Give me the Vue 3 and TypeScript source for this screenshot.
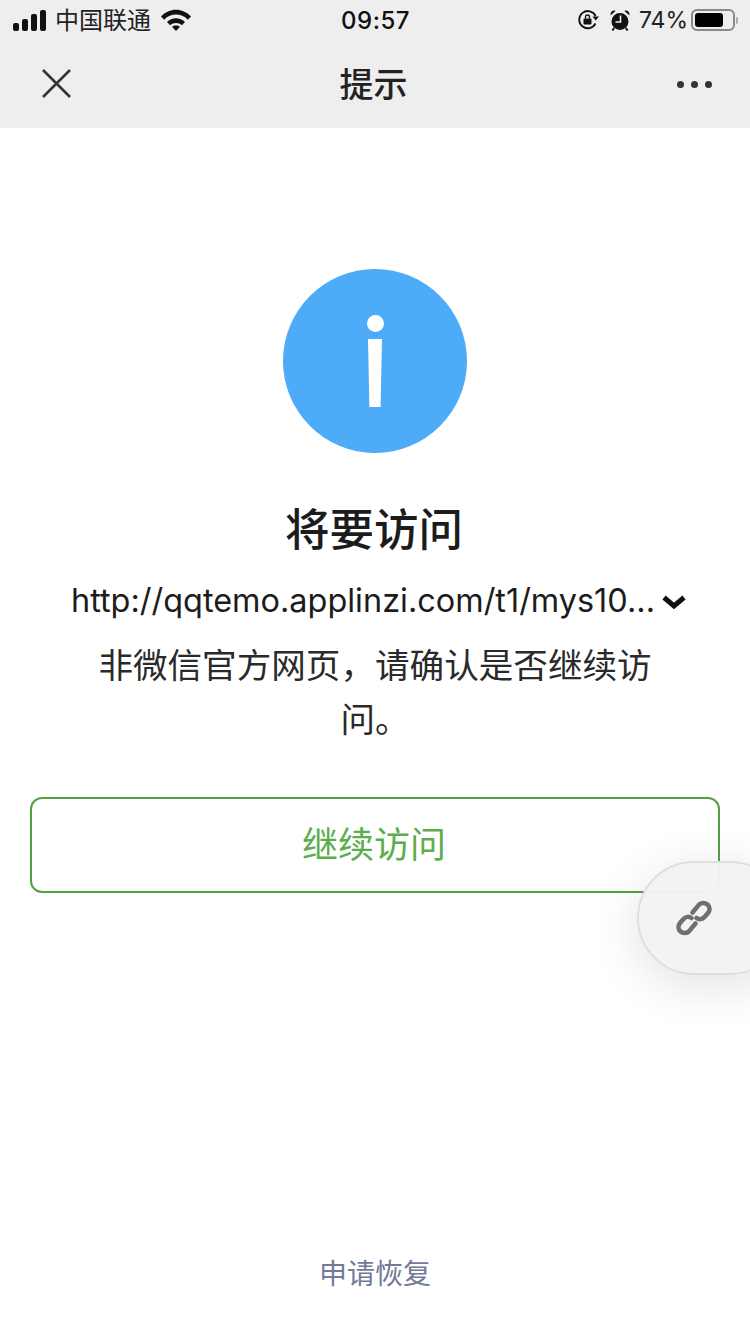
<script setup lang="ts">
const signalBars = [8, 12, 17, 21];
</script>

<template>
  <div class="page">
    <header class="top">
      <div class="status">
        <div class="status__left">
          <div class="signal">
            <i v-for="h in signalBars" :key="h" :style="{ height: h + 'px' }"></i>
          </div>
          <span class="carrier">中国联通</span>
          <svg class="wifi" width="30" height="22" viewBox="0 0 30 22">
            <path d="M0 7.500C8.300 -1.500 21.700 -1.500 30 7.500L26.900 10.700C20 3.900 10 3.900 3.100 10.700Z" fill="#111" />
            <path d="M6 13C11.200 8 18.800 8 24 13L20.900 16.200C17.400 13.100 12.600 13.100 9.100 16.200Z" fill="#111" />
            <path d="M11 17.800C13.300 15.900 16.700 15.900 19 17.800L15 22Z" fill="#111" />
          </svg>
        </div>
        <span class="time">09:57</span>
        <div class="status__right">
          <svg class="lock" width="22" height="22" viewBox="0 0 22 22">
            <path d="M18.500 14.500A8.600 8.600 0 1 1 18.600 7" fill="none" stroke="#111" stroke-width="1.800" />
            <path d="M15.500 7.500h6.500L18.700 11.500Z" fill="#111" />
            <rect x="6.500" y="9.500" width="8" height="6" rx="1" fill="#111" />
            <path d="M8.500 9.500V8a2 2 0 0 1 4 0v1.500" fill="none" stroke="#111" stroke-width="1.400" />
          </svg>
          <svg class="alarm" width="20" height="21" viewBox="0 0 20 21">
            <circle cx="10" cy="11.500" r="8.500" fill="#111" />
            <path d="M.5 5.500 5.500 1C3.500-.2 .2 1.500 .5 5.500ZM19.500 5.500 14.500 1C16.500-.2 19.800 1.500 19.500 5.500Z" fill="#111" />
            <path d="M4 18 2.500 20.500M16 18l1.500 2.500" stroke="#111" stroke-width="2" />
            <path d="M10.500 5.500v6.500H5.500" fill="none" stroke="#eee" stroke-width="1.600" />
          </svg>
          <span class="percent">74%</span>
          <div class="battery"><i></i></div>
          <div class="battery-tip"></div>
        </div>
      </div>
      <nav class="nav">
        <svg class="nav__close" width="29" height="29" viewBox="0 0 29 29">
          <path d="M1 1 28 28M28 1 1 28" stroke="#333" stroke-width="2.600" fill="none" />
        </svg>
        <span class="nav__title">提示</span>
        <div class="nav__more"><i></i><i></i><i></i></div>
      </nav>
    </header>

    <main class="content">
      <div class="info-icon">
        <i class="info-icon__dot"></i>
        <i class="info-icon__bar"></i>
      </div>
      <h1 class="title">将要访问</h1>
      <div class="url">
        <span class="url__text">http://qqtemo.applinzi.com/t1/mys10...</span>
        <svg class="url__arrow" width="26" height="16" viewBox="0 0 26 16">
          <path d="M3 3.500 13 12 23 3.500" fill="none" stroke="#111" stroke-width="5" />
        </svg>
      </div>
      <p class="desc">非微信官方网页，请确认是否继续访问。</p>
      <button class="continue"><span>继续访问</span></button>
    </main>

    <div class="float-link">
      <svg width="40" height="40" viewBox="0 0 40 40">
        <g fill="none" stroke="#6f6f6f" stroke-width="4.600" stroke-linecap="round">
          <path d="M18.500 14.500 24.800 6.900C27 4.500 31 4.300 33.500 6.500C36 8.800 36.100 12.500 34 15L30.500 19C28.500 21.300 25 21.800 22.500 20" />
          <path d="M21.500 25.500 15.200 33.100C13 35.500 9 35.700 6.500 33.500C4 31.200 3.900 27.500 6 25L9.500 21C11.500 18.700 15 18.200 17.500 20" />
        </g>
      </svg>
    </div>

    <footer class="restore">申请恢复</footer>
  </div>
</template>

<style scoped>
.page {
  position: relative;
  width: 750px;
  height: 1334px;
  overflow: hidden;
  background: #fff;
  font-family: Inter, "Noto Sans CJK SC", sans-serif;
  display: flex;
  flex-direction: column;
}

.top {
  height: 128px;
  background: #eee;
  flex-shrink: 0;
}

.status {
  height: 40px;
  padding: 0 12px 0 13px;
  display: grid;
  grid-template-columns: 1fr auto 1fr;
  align-items: center;
  color: #111;
}

.status__left {
  display: flex;
  align-items: center;
}

.signal {
  display: flex;
  align-items: flex-end;
  gap: 3px;
  height: 21px;
}

.signal i {
  width: 6px;
  background: #111;
  border-radius: 2px;
}

.carrier {
  margin: -3px 0 0 9px;
  font-size: 24px;
  color: #222;
}

.wifi {
  margin-left: 10px;
}

.time {
  font-size: 24px;
  font-weight: 500;
  letter-spacing: 0.5px;
  color: #111;
}

.status__right {
  display: flex;
  align-items: center;
  justify-content: flex-end;
}

.lock {
  margin-right: 11px;
}

.alarm {
  margin-right: 9px;
}

.percent {
  font-size: 23px;
  margin-right: 3px;
  color: #222;
}

.battery {
  width: 44px;
  height: 22px;
  border: 2px solid #8a8a8a;
  border-radius: 6px;
  padding: 2px;
  box-sizing: border-box;
  display: flex;
}

.battery i {
  width: 28px;
  background: #000;
  border-radius: 3px;
}

.battery-tip {
  width: 2px;
  height: 7px;
  background: #aaa;
  margin-left: 1px;
  border-radius: 0 2px 2px 0;
}

.nav {
  height: 88px;
  padding: 0 38px 0 42px;
  display: grid;
  grid-template-columns: 1fr auto 1fr;
  align-items: center;
}

.nav__close {
  margin-top: -2px;
}

.nav__title {
  margin: -4px 7px 0 0;
  font-size: 34px;
  font-weight: 500;
  color: #222;
}

.nav__more {
  display: flex;
  gap: 7px;
  justify-content: flex-end;
}

.nav__more i {
  width: 7px;
  height: 7px;
  border-radius: 50%;
  background: #333;
}

.content {
  display: flex;
  flex-direction: column;
  align-items: center;
  padding: 141px 30px 0;
}

.info-icon {
  width: 184px;
  height: 184px;
  border-radius: 50%;
  background: #4dabf7;
  display: flex;
  flex-direction: column;
  align-items: center;
  padding-top: 46px;
  box-sizing: border-box;
}

.info-icon__dot {
  width: 17px;
  height: 17px;
  border-radius: 50%;
  background: #fff;
}

.info-icon__bar {
  width: 14px;
  height: 68px;
  margin-top: 7px;
  background: #fff;
  clip-path: polygon(0 0, 100% 0, 90% 100%, 10% 100%);
}

.title {
  margin: 45px 2px 0 0;
  font-size: 44.5px;
  line-height: 64px;
  font-weight: 500;
  color: #1c1c1c;
}

.url {
  margin-top: 16px;
  height: 44px;
  padding-left: 8px;
  display: flex;
  align-items: center;
  gap: 6px;
}

.url__text {
  font-size: 32.45px;
  color: #1c1c1c;
  white-space: nowrap;
}

.url__arrow {
  margin-top: 3px;
}

.desc {
  margin: 16px 0 0;
  width: 560px;
  font-size: 34.6px;
  line-height: 54px;
  text-align: center;
  color: #2a2a2a;
}

.continue {
  margin-top: 51px;
  width: 690px;
  height: 96px;
  padding: 0 2px 6px 0;
  border: 2px solid #55a043;
  border-radius: 12px;
  background: #fff;
  font-family: inherit;
  font-size: 36px;
  color: #5cae4b;
}

.float-link {
  position: absolute;
  left: 637px;
  top: 861px;
  width: 150px;
  height: 114px;
  box-sizing: border-box;
  padding-left: 35px;
  display: flex;
  align-items: center;
  border: 2px solid #dedede;
  border-radius: 57px;
  background: rgba(243, 243, 243, 0.98);
  box-shadow: 0 10px 50px rgba(0, 0, 0, 0.12);
}

.restore {
  position: absolute;
  left: 0;
  right: 0;
  bottom: 40px;
  text-align: center;
  font-size: 28px;
  line-height: 40px;
  color: #717a99;
}
</style>
